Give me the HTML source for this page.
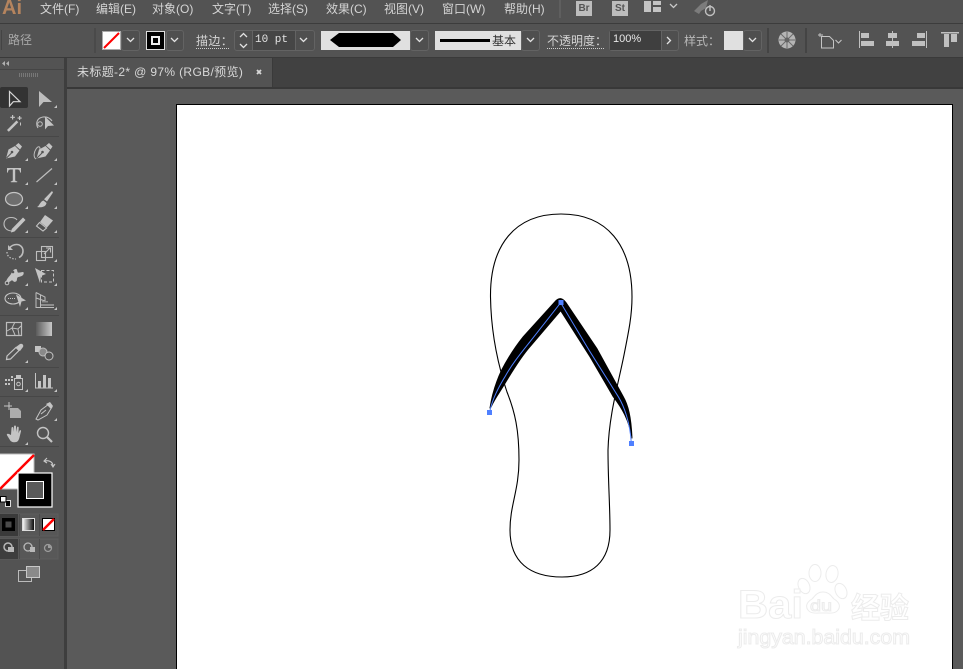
<!DOCTYPE html>
<html lang="zh-CN">
<head>
<meta charset="utf-8">
<title>Illustrator</title>
<style>
html,body{margin:0;padding:0;width:963px;height:669px;overflow:hidden;background:#5a5a5a}
body{position:relative;font-family:"Liberation Sans","Noto Sans CJK SC",sans-serif;color:#d4d4d4}
.a{position:absolute}
.t{position:absolute;white-space:nowrap;font-size:12px;line-height:14px}
.b{position:absolute;box-sizing:border-box;border:1px solid #636363;border-radius:3px;background:#4f4f4f}
.u{border-bottom:1px dotted #cfcfcf;height:15px}
</style>
</head>
<body>
<!-- regions -->
<div class="a" style="left:0;top:0;width:963px;height:23px;background:#535353"></div>
<div class="a" style="left:0;top:23px;width:963px;height:1px;background:#3c3c3c"></div>
<div class="a" style="left:0;top:24px;width:963px;height:33px;background:#535353"></div>
<div class="a" style="left:0;top:57px;width:963px;height:1px;background:#3a3a3a"></div>
<div class="a" style="left:67px;top:58px;width:896px;height:29px;background:#414141"></div>
<div class="a" style="left:67px;top:58px;width:206px;height:29px;background:#535353;border-right:1px solid #3a3a3a;box-sizing:border-box"></div>
<div class="a" style="left:67px;top:87px;width:896px;height:2px;background:#383838"></div>
<div class="a" style="left:0;top:58px;width:64px;height:611px;background:#535353"></div>
<div class="a" style="left:0;top:69px;width:64px;height:1px;background:#454545"></div>
<div class="a" style="left:64px;top:58px;width:3px;height:611px;background:#3e3e3e"></div>
<div class="a" style="left:176px;top:104px;width:777px;height:565px;box-sizing:border-box;background:#fff;border:1px solid #000;border-bottom:0"></div>

<!-- menu text -->
<div class="t" style="left:2px;top:-3px;font-size:20px;line-height:22px;font-weight:bold;color:#b5845e">Ai</div>
<div class="t" style="left:40px;top:2px">文件(F)</div>
<div class="t" style="left:96px;top:2px">编辑(E)</div>
<div class="t" style="left:152px;top:2px">对象(O)</div>
<div class="t" style="left:212px;top:2px">文字(T)</div>
<div class="t" style="left:268px;top:2px">选择(S)</div>
<div class="t" style="left:326px;top:2px">效果(C)</div>
<div class="t" style="left:384px;top:2px">视图(V)</div>
<div class="t" style="left:442px;top:2px">窗口(W)</div>
<div class="t" style="left:504px;top:2px">帮助(H)</div>
<div class="a" style="left:559px;top:0;width:2px;height:18px;background:#5f5f5f"></div>
<div class="a" style="left:576px;top:1px;width:16px;height:15px;background:#bdbdbd;color:#555;font:bold 10px/15px 'Liberation Sans',sans-serif;text-align:center">Br</div>
<div class="a" style="left:612px;top:1px;width:16px;height:15px;background:#bdbdbd;color:#555;font:bold 10px/15px 'Liberation Sans',sans-serif;text-align:center">St</div>

<!-- control bar -->
<div class="t" style="left:8px;top:33px;color:#a8a8a8">路径</div>
<div class="b" style="left:121px;top:30px;width:19px;height:21px"></div>
<div class="a" style="left:102px;top:31px;width:19px;height:19px;background:#fff;border:1px solid #aaa;box-sizing:border-box"></div>
<div class="b" style="left:166px;top:30px;width:18px;height:21px"></div>
<div class="a" style="left:146px;top:31px;width:19px;height:19px;background:#000;border:1px solid #ddd;box-sizing:border-box"></div>
<div class="a" style="left:151px;top:36px;width:9px;height:9px;box-sizing:border-box;border:2px solid #eee;background:#000"></div>
<div class="t u" style="left:196px;top:34px;width:33px;letter-spacing:.4px;height:14px">描边：</div>
<div class="b" style="left:234px;top:30px;width:81px;height:21px"></div>
<div class="a" style="left:252px;top:31px;width:44px;height:19px;background:#464646;border-left:1px solid #636363;border-right:1px solid #636363;box-sizing:border-box"></div>
<div class="t" style="left:255px;top:33px;font:11px/14px 'Liberation Mono',monospace;color:#e4e4e4">10 pt</div>
<div class="a" style="left:321px;top:31px;width:89px;height:19px;background:#e0e0e0"></div>
<div class="b" style="left:410px;top:30px;width:19px;height:21px"></div>
<div class="a" style="left:435px;top:31px;width:86px;height:19px;background:#e0e0e0"></div>
<div class="a" style="left:440px;top:39px;width:50px;height:3px;background:#000"></div>
<div class="t" style="left:492px;top:34px;color:#333">基本</div>
<div class="b" style="left:521px;top:30px;width:19px;height:21px"></div>
<div class="t u" style="left:547px;top:34px;width:57px;height:14px">不透明度：</div>
<div class="b" style="left:609px;top:30px;width:70px;height:21px"></div>
<div class="a" style="left:610px;top:31px;width:51px;height:19px;background:#3f3f3f;border-right:1px solid #636363"></div>
<div class="t" style="left:613px;top:32px;font-size:11px;color:#e8e8e8">100%</div>
<div class="t" style="left:684px;top:34px;color:#b8b8b8">样式：</div>
<div class="b" style="left:743px;top:30px;width:19px;height:21px"></div>
<div class="a" style="left:724px;top:31px;width:19px;height:19px;background:#e0e0e0"></div>
<div class="a" style="left:767px;top:28px;width:2px;height:25px;background:#444"></div>
<div class="a" style="left:805px;top:28px;width:2px;height:25px;background:#444"></div>
<div class="a" style="left:1px;top:30px;width:1px;height:20px;background:#444"></div>
<div class="a" style="left:94px;top:28px;width:2px;height:25px;background:#4a4a4a"></div>

<!-- tab -->
<div class="t" style="left:77px;top:65px;color:#d8d8d8;letter-spacing:.35px">未标题-2* @ 97% (RGB/预览)</div>

<!-- all vector graphics -->
<svg class="a" style="left:0;top:0" width="963" height="669" viewBox="0 0 963 669" xmlns="http://www.w3.org/2000/svg">
<defs>
<linearGradient id="g1"><stop offset="0" stop-color="#5c5c5c"/><stop offset="1" stop-color="#c8c8c8"/></linearGradient>
<linearGradient id="g2"><stop offset="0" stop-color="#fff"/><stop offset="1" stop-color="#000"/></linearGradient>
</defs>
<!-- menu icons -->
<path d="M644 1h7v11h-7zM653 1h8v4h-8zM653 7h8v5h-8z" fill="#c4c4c4"/>
<path d="M670 4l3.500 3.500L677 4" fill="none" stroke="#c8c8c8" stroke-width="1.300"/>
<path d="M694 11L701 4l7-4-2 8-5 3-2 3z" fill="#7c7c7c"/>
<circle cx="710" cy="11" r="4.500" fill="#535353" stroke="#c0c0c0" stroke-width="1.400"/>
<path d="M710 5v6" stroke="#c0c0c0" stroke-width="1.400"/>

<!-- control icons -->
<path d="M104 48L119 33" stroke="#f00" stroke-width="2"/>
<g fill="none" stroke="#e2e2e2" stroke-width="1.300">
<path d="M127 38l3.500 3.500L134 38M171 38l3.500 3.500L178 38M300 38l3.500 3.500L307 38M416 38l3.500 3.500L423 38M527 38l3.500 3.500L534 38M749 38l3.500 3.500L756 38"/>
<path d="M240 37l3.500-3.500L247 37M240 44l3.500 3.500L247 44"/>
<path d="M667 37l3.500 3.500L667 44"/>
</g>
<path d="M330 40l9-7h54l8 7-8 7h-54z" fill="#000"/>
<circle cx="787" cy="40" r="8.500" fill="#b5b5b5"/>
<g stroke="#6a6a6a" stroke-width="1"><path d="M787 32v16M779 40h16M781 34l12 12M793 34l-12 12"/></g>
<circle cx="787" cy="40" r="2.500" fill="#636363"/>
<g fill="none" stroke="#c4c4c4" stroke-width="1">
<path d="M821.500 36.500h8l4 4v7.500h-12z"/>
<path d="M818 35h5M820 33v4" stroke-width=".9"/>
<path d="M835.500 40l3 3 3-3" stroke-width="1.100"/>
</g>
<g fill="#c0c0c0">
<path d="M859 31h1v17h-1zM861 33h8v5h-8zM861 41h13v5h-13z"/>
<path d="M892 31h1v17h-1zM888 33h9v5h-9zM886 41h13v5h-13z"/>
<path d="M926 31h1v17h-1zM917 33h8v5h-8zM912 41h13v5h-13z"/>
<path d="M941 32h18v1.500h-18zM944 34h5v13h-5zM951 34h6v8h-6z"/>
</g>

<!-- panel top -->
<path d="M5 61l-3 2.500 3 2.500zM9 61l-3 2.500 3 2.500z" fill="#b0b0b0"/>
<path d="M19.500 73v4M21.500 73v4M23.500 73v4M25.500 73v4M27.500 73v4M29.500 73v4M31.500 73v4M33.500 73v4M35.500 73v4M37.500 73v4" stroke="#777" stroke-width="1"/>
<rect x="0" y="87" width="28" height="21" rx="2" fill="#333"/>
<path d="M0 136.500h59M0 237.500h59M0 315.500h59M0 367.500h59M0 396.500h59M0 446.500h59" stroke="#474747" stroke-width="1"/>

<!-- tools: selection -->
<path d="M9.500 91.500v14.500l3.800-4.300h6.700z" fill="none" stroke="#d8d8d8" stroke-width="1.200"/>
<path d="M39 91v16l4.500-5H52z" fill="#bdbdbd"/>
<!-- wand -->
<path d="M7 130l9.500-9.500 1.800 1.800L8.800 131.800z" fill="#c4c4c4"/>
<path d="M12 115h1.200v4.500H12zM10.300 116.700h4.600v1.200h-4.600zM19 116h1.200v4H19zM17.500 117.500h4.200v1.100h-4.200zM20 122.500h1v3h-1z" fill="#c4c4c4"/>
<!-- lasso -->
<path d="M38 128c-2.500-4-1.500-10 5-11 4-.5 7 1 9 4" fill="none" stroke="#bdbdbd" stroke-width="1.100"/>
<circle cx="40" cy="124" r="2.300" fill="none" stroke="#bdbdbd"/>
<path d="M45 116.500v13l3-3.500 6-.5z" fill="#c4c4c4"/>
<!-- pen -->
<g fill="#c4c4c4">
<path d="M6 158.500l2.500-9 6.500-3.500 4.500 4.500-4.500 6z"/>
<path d="M15.500 145.500l3-2.500 3.500 3.500-2 3z"/>
<path d="M36.500 158.500l2.500-9 6.500-3.500 4.500 4.500-4.500 6z"/>
<path d="M46 145.500l3-2.500 3.500 3.500-2 3z"/>
</g>
<path d="M6.500 158l5-5M37 158l5-5" stroke="#535353" stroke-width="1"/>
<circle cx="12" cy="152" r="1.300" fill="#535353"/>
<circle cx="42.500" cy="152" r="1.300" fill="#535353"/>
<path d="M36 159c-3-2-2-7 0-10 2-3 4-3 4 0" fill="none" stroke="#bdbdbd"/>
<!-- T -->
<path d="M7 168h14v4.500h-1c0-2-.8-3-2.800-3H15.200v10.500c0 1 .8 1.300 2 1.300v.9h-6.400v-.9c1.200 0 2-.3 2-1.300V169.500h-2c-2 0-2.800 1-2.800 3H7z" fill="#c4c4c4"/>
<!-- line -->
<path d="M36.500 182L52 168.500" stroke="#bdbdbd" stroke-width="1.200"/>
<!-- ellipse -->
<ellipse cx="14" cy="199" rx="8.500" ry="6.500" fill="#6e6e6e" stroke="#c4c4c4" stroke-width="1.200"/>
<!-- brush -->
<path d="M52 191l1 1.500-6 9-3-2.200z" fill="#c4c4c4"/>
<path d="M43.500 200.500l3 2.500c-.5 3.500-4.500 5-9.500 4 2.500-1 3-5.500 6.500-6.500z" fill="#c4c4c4"/>
<!-- shaper -->
<path d="M11.500 231C6 230.500 4 227 4 224c0-4 3-6.500 7-6.500 2.500 0 5 1 6 2.500" fill="none" stroke="#bdbdbd" stroke-width="1.100"/>
<path d="M23 217.500l2.500 2.500-11 11.500-3.500 1 .800-3.500z" fill="#c4c4c4"/>
<!-- eraser -->
<path d="M45 215l8 5.500-6 7-7-5.500z" fill="#c4c4c4"/>
<path d="M39.500 222.500l7 5.500-3.500 3-6.500-5z" fill="none" stroke="#c4c4c4" stroke-width="1.100"/>
<!-- rotate -->
<path d="M9.500 248c2-2.500 4.500-3.500 7-3.500 4 0 6.500 3 6.500 6.500 0 3.500-2 5.500-4 6.500" fill="none" stroke="#bdbdbd" stroke-width="1.600"/>
<path d="M8 245v5h5z" fill="#bdbdbd"/>
<path d="M7 252c0 4 3 7 9 7" fill="none" stroke="#bdbdbd" stroke-width="1.300" stroke-dasharray="1.500 1.500"/>
<!-- scale -->
<g fill="none" stroke="#bdbdbd" stroke-width="1.100">
<rect x="36.500" y="251.500" width="9" height="9"/>
<rect x="41.500" y="246.500" width="11" height="11"/>
<path d="M44 254l6-6M46 248h4.500v4.500"/>
</g>
<!-- puppet warp -->
<path d="M6 282c1-4 3-5 5-8 1.500-3 3-5 5-5 1.500 0 1 3 2 3.500 1.500.500 3-.5 5-.5 1 0 1 2.500-.5 3.500-2 1.500-4 1-5 2-1 1.500 0 3-1.500 4-2.500 1.500-3-2-4.500-1-1.500 1-3 2.500-5.500 1.500z" fill="#c4c4c4"/>
<circle cx="7" cy="283" r="1.800" fill="#535353" stroke="#c4c4c4"/>
<circle cx="13" cy="272" r="1.300" fill="#535353"/>
<!-- free transform -->
<path d="M35 268l11 6-5 2-1 7z" fill="#c4c4c4"/>
<rect x="41.500" y="270.500" width="12" height="11.500" fill="none" stroke="#c4c4c4" stroke-dasharray="3 2"/>
<!-- shape builder -->
<ellipse cx="13" cy="298.500" rx="8" ry="5.500" fill="none" stroke="#c4c4c4" stroke-width="1.100"/>
<path d="M8 298.500h8" stroke="#c4c4c4" stroke-dasharray="1 1"/>
<path d="M16 294.500l10 6-4.500 1-1.500 5.500z" fill="#c4c4c4"/>
<!-- perspective -->
<path d="M36 292.500v15h18M36 292.500l9 4.500v5M36 298l9 3M40.500 295v12" fill="none" stroke="#bdbdbd"/>
<path d="M42 301h6v1.500h-6zM41 304h13v2h-13z" fill="#8e8e8e"/>
<!-- mesh -->
<rect x="6.500" y="322.500" width="15" height="13" fill="none" stroke="#bdbdbd" stroke-width="1.200"/>
<path d="M7 331l5-3 3-6M12 328l3 7M12 328l6 1 3-3M18 329l1 6" fill="none" stroke="#bdbdbd"/>
<!-- gradient -->
<rect x="36" y="322" width="16" height="14" fill="url(#g1)"/>
<!-- eyedropper -->
<path d="M6.500 359.500l.5-3.500 9-8.500 3 3-8.500 8.500z" fill="none" stroke="#c4c4c4" stroke-width="1.200"/>
<path d="M16 347l4-3c2-1 4 1 3 3l-3 4z" fill="#c4c4c4"/>
<!-- blend -->
<path d="M35 346h6v6h-6z" fill="#c4c4c4"/>
<circle cx="43" cy="352" r="4" fill="#8a8a8a" stroke="#bdbdbd"/>
<circle cx="49" cy="356" r="4" fill="#535353" stroke="#c4c4c4"/>
<!-- spray -->
<path d="M5 379h2v2H5zM8 379h2v2H8zM11 379h2v2h-2zM5 383h2v2H5zM8 383h2v2H8zM11 376h2v2h-2zM16 375h5v3h-5z" fill="#c4c4c4"/>
<rect x="14.500" y="378.500" width="8" height="11" fill="none" stroke="#c4c4c4"/>
<circle cx="18.500" cy="384" r="1.800" fill="none" stroke="#c4c4c4"/>
<!-- graph -->
<path d="M35.500 373v15h17.500" fill="none" stroke="#c4c4c4"/>
<path d="M38 381h3v7h-3zM43 375h3v13h-3zM48 378h3v10h-3z" fill="#c4c4c4"/>
<!-- artboard -->
<path d="M4 406h8M9 402v8" stroke="#c4c4c4"/>
<path d="M10 408h8l3 3v7H10z" fill="#c4c4c4" opacity=".8"/>
<!-- slice -->
<path d="M36 419l5-9 8-6 3 3-5 8-9 5zM41 414l5-4" fill="none" stroke="#c4c4c4"/>
<path d="M46 404l4-2 3 4-2 3z" fill="#c4c4c4"/>
<!-- hand -->
<path d="M9 434l2 1 .5-7c.3-1.300 1.500-1.300 1.800 0l.2 4 .5-5.500c.3-1.300 1.700-1.300 2 0l.2 5.500.8-4.500c.3-1.300 1.700-1 1.700.2l-.2 5.500 1-2.500c.5-1 1.800-.6 1.500.6l-1.500 6c-.8 3.500-2 5-5 5-2.500 0-4-1-5-3l-2.500-4c-.7-1.200.5-2 2-1.300z" fill="#c4c4c4"/>
<!-- zoom -->
<circle cx="43" cy="433" r="5.500" fill="none" stroke="#c4c4c4" stroke-width="1.400"/>
<path d="M47 437l5 5" stroke="#c4c4c4" stroke-width="2.200"/>
<!-- corner triangles -->
<path fill="#c4c4c4" d="M28 161v-3l-3 3zM57 161v-3l-3 3zM57 185v-3l-3 3zM28 185v-3l-3 3zM28 209v-3l-3 3zM57 209v-3l-3 3zM28 233v-3l-3 3zM57 233v-3l-3 3zM28 262v-3l-3 3zM57 262v-3l-3 3zM28 286v-3l-3 3zM57 286v-3l-3 3zM28 310v-3l-3 3zM57 310v-3l-3 3zM28 363v-3l-3 3zM28 392v-3l-3 3zM57 392v-3l-3 3zM57 421v-3l-3 3zM28 445v-3l-3 3zM57 108v-3l-3 3z"/>

<!-- fill and stroke -->
<rect x="-1" y="454" width="35" height="35" fill="#fff" stroke="#bbb"/>
<path d="M0 489L34 455" stroke="#f00" stroke-width="2.500"/>
<rect x="18" y="473" width="34" height="34" fill="#000" stroke="#fff" stroke-width="1.200"/>
<rect x="26.500" y="481.500" width="17" height="17" fill="#5a5a5a" stroke="#fff"/>
<path d="M45 461c4-1 8 1 8 5M47 458l-3 3 3 2M51 464l2 3 2-3" fill="none" stroke="#c8c8c8" stroke-width="1.100"/>
<rect x="5.500" y="500.500" width="5" height="6" fill="#000" stroke="#ddd"/>
<rect x="0.500" y="496.500" width="5.500" height="5.500" fill="#fff" stroke="#000"/>
<!-- mode rows -->
<rect x="0" y="514" width="58" height="22" fill="#575757" stroke="#5d5d5d"/>
<rect x="0" y="514" width="18" height="22" fill="#3a3a3a"/>
<rect x="2" y="518" width="13" height="13" fill="#000"/>
<rect x="5.500" y="521.500" width="6" height="6" fill="#4a4a4a"/>
<rect x="22.500" y="518.500" width="12" height="12" fill="url(#g2)" stroke="#ddd"/>
<rect x="42.500" y="518.500" width="12" height="12" fill="#fff" stroke="#000"/>
<path d="M43 530L54 519" stroke="#f00" stroke-width="2.500"/>
<path d="M19.500 514v22M39.500 514v22" stroke="#4b4b4b"/>
<rect x="0" y="539" width="58" height="20" fill="#585858" stroke="#5e5e5e"/>
<rect x="0" y="539" width="18" height="20" fill="#3d3d3d"/>
<path d="M19.500 539v20M39.500 539v20" stroke="#4b4b4b"/>
<g fill="#b8b8b8">
<path d="M8 552h6v-5h-6z"/><circle cx="8" cy="547" r="4" fill="none" stroke="#b8b8b8" stroke-width="1.500"/>
<path d="M30 552h5v-5h-5z"/><circle cx="28" cy="547" r="4" fill="none" stroke="#b8b8b8" stroke-width="1.300"/>
<circle cx="48" cy="548" r="3.500" fill="none" stroke="#9c9c9c" stroke-width="1.300"/><path d="M48 545a3 3 0 0 1 3 3h-3z" fill="#9c9c9c"/>
</g>
<rect x="18.500" y="570.500" width="13" height="11" fill="#555" stroke="#bbb"/>
<rect x="26.500" y="566.500" width="13" height="11" fill="#8a8a8a" stroke="#c8c8c8"/>

<!-- tab close -->
<path d="M257 70l4 4M261 70l-4 4" stroke="#d8d8d8" stroke-width="1.800"/>

<!-- flip flop -->
<path d="M561 214C515 214 490 245 490.500 297C491 330 497 362 507 392C515 412 519 430 519 460C519 490 510 505 510 530C510 562 530 577 562 577C592 577 610 562 610 530C610 505 608 480 608 450C609 415 618 385 624 355C629 330 632 315 632 297C632 245 607 214 561 214Z" fill="none" stroke="#000" stroke-width="1.100"/>
<path d="M490 408C492 395 496 382 501.700 370C508 358 515 347 523.300 336.700L555 301.700Q560.500 295 566 302.700L596.700 348.300L623.300 396.700C628 405 631 416 632 438C629 420 622 408 613.300 396.700L590 356.700L560.700 310.700L530 346.700C520 358 512 372 505 383.300C500 392 495 398 491 407Z" fill="#000" stroke="#000" stroke-width="1" stroke-linejoin="round"/>
<path d="M489.700 412C492 400 498 388 505 376.700C512 364 521 353 530 341.700L560.700 302.700L590 351.700L618.300 396.700C624 406 630 422 631.300 443" fill="none" stroke="#4f80ff" stroke-width="1"/>
<rect x="558.500" y="300" width="5" height="5" fill="#4f80ff"/>
<rect x="487" y="410" width="5" height="5" fill="#4f80ff"/>
<rect x="629" y="441" width="5" height="5" fill="#4f80ff"/>

<!-- watermark -->
<g fill="#fff" stroke="#ececec" stroke-width="1">
<ellipse cx="815" cy="573" rx="6" ry="8.500"/>
<ellipse cx="832" cy="574" rx="6" ry="8.500" transform="rotate(10 832 574)"/>
<ellipse cx="804" cy="586" rx="5.500" ry="8" transform="rotate(-25 804 586)"/>
<ellipse cx="841" cy="591" rx="5.500" ry="8" transform="rotate(-25 841 591)"/>
<path d="M823 592c-6 0-8 4-11 7-5 3-7 7-4 11 3 4 8 3 15 3 7 0 12 1 15-3 3-4 1-8-4-11-3-3-5-7-11-7z"/>
<text x="738" y="618" font-family="Liberation Sans,sans-serif" font-size="40" font-weight="bold" textLength="65" lengthAdjust="spacingAndGlyphs">Bai</text>
<text x="810" y="611" font-family="Liberation Sans,sans-serif" font-size="16" textLength="22" lengthAdjust="spacingAndGlyphs">du</text>
<text x="851" y="618" font-family="Noto Sans CJK SC,sans-serif" font-size="29" font-weight="bold">经验</text>
<text x="738" y="644" font-family="Liberation Sans,sans-serif" font-size="20" textLength="172" lengthAdjust="spacingAndGlyphs">jingyan.baidu.com</text>
</g>
</svg>
</body>
</html>
